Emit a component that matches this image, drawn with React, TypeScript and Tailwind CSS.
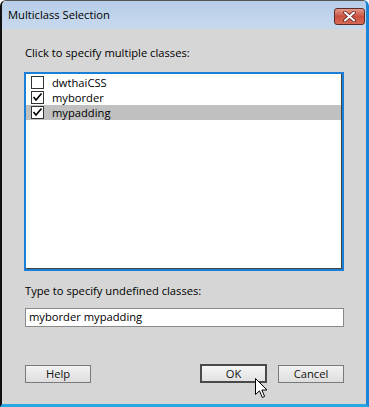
import React from 'react'

type Item = { name: string; checked: boolean; selected?: boolean }

const items: Item[] = [
  { name: 'dwthaiCSS', checked: false },
  { name: 'myborder', checked: true },
  { name: 'mypadding', checked: true, selected: true },
]

const CheckBox = ({ checked }: { checked: boolean }) => (
  <div className="w-[13px] h-[13px] shrink-0 bg-white border border-[#333] flex items-center justify-center">
    {checked && (
      <svg width="11" height="11" viewBox="0 0 11 11">
        <path d="M1.5 5 L4 8 L9.5 1.5" fill="none" stroke="#000" strokeWidth="1.6" />
      </svg>
    )}
  </div>
)

const Button = ({ label, primary }: { label: string; primary?: boolean }) => (
  <button
    className={
      primary
        ? 'w-[67px] h-[19px] border-2 border-[#4a4a4a] bg-gradient-to-b from-[#f6f6f6] to-[#e2e2e2] text-[11.2px] leading-none text-[#111]'
        : 'w-[66px] h-[18px] border border-[#7a7a7a] bg-gradient-to-b from-[#f2f2f2] to-[#dedede] text-[11.2px] leading-none text-[#111]'
    }
  >
    {label}
  </button>
)

export default function App() {
  return (
    <div className="w-[369px] h-[407px] bg-white relative" style={{ fontFamily: '"Open Sans", "Noto Sans", sans-serif' }}>
      <div className="w-full h-full flex flex-col rounded-t-[6px] overflow-hidden border-l-2 border-l-[#111] border-t border-t-[#555] border-r-[3px] border-r-[#1a86d8] border-b-[3px] border-b-[#27a6e0]">
        {/* title bar */}
        <div className="h-[28px] shrink-0 flex items-center justify-between pl-[6px] pr-[1px] bg-gradient-to-b from-[#b6cde8] to-[#c8d9ee]">
          <span className="text-[11.2px] text-black">Multiclass Selection</span>
          <div className="w-[31px] h-[17px] rounded-[3px] border border-[#5b2a2a] bg-gradient-to-b from-[#e49a8a] via-[#c9503f] to-[#d76a55] flex items-center justify-center mt-[2px]">
            <svg width="13" height="11" viewBox="0 0 13 11">
              <path d="M2 1.5 L11 9.5 M11 1.5 L2 9.5" stroke="#5a2020" strokeWidth="3.6" strokeLinecap="round" />
              <path d="M2 1.5 L11 9.5 M11 1.5 L2 9.5" stroke="#fff" strokeWidth="2" strokeLinecap="round" />
            </svg>
          </div>
        </div>

        {/* body */}
        <div className="flex-1 bg-[#d6d6d6] px-[22px] flex flex-col text-[11.2px] text-black">
          <div className="mt-[16px] h-[16px] leading-[16px] pl-[1px]">Click to specify multiple classes:</div>
          <div className="mt-[11px] h-[199px] border-2 border-[#1a7fd6] bg-white">
            <div className="h-full border-b border-r border-[#444] pt-[1px]">
              {items.map((it) => (
                <div
                  key={it.name}
                  className={'h-[15px] flex items-center gap-[8px] pl-[5px] ' + (it.selected ? 'bg-[#c0c0c0]' : '')}
                >
                  <CheckBox checked={it.checked} />
                  <span className="leading-[15px]">{it.name}</span>
                </div>
              ))}
            </div>
          </div>

          <div className="mt-[12px] h-[16px] leading-[16px] pl-[1px]">Type to specify undefined classes:</div>
          <div className="mt-[9px] ml-[1px] w-[319px] h-[19px] bg-white border border-[#8a8a8a] flex items-center pl-[3px]">
            myborder mypadding
          </div>

          <div className="mt-[37px] ml-[1px] w-[319px] flex items-center">
            <Button label="Help" />
            <div className="flex-1" />
            <Button label="OK" primary />
            <div className="w-[11px]" />
            <Button label="Cancel" />
          </div>
        </div>
      </div>

      {/* mouse cursor */}
      <svg className="absolute left-[255px] top-[378px]" width="13" height="21" viewBox="0 0 13 21">
        <path d="M0.5 0.5 L0.5 16.5 L4.5 12.8 L7.3 19.5 L9.6 18.5 L6.9 12 L12 12 Z" fill="#fff" stroke="#000" strokeWidth="1" strokeLinejoin="miter" />
      </svg>
    </div>
  )
}
